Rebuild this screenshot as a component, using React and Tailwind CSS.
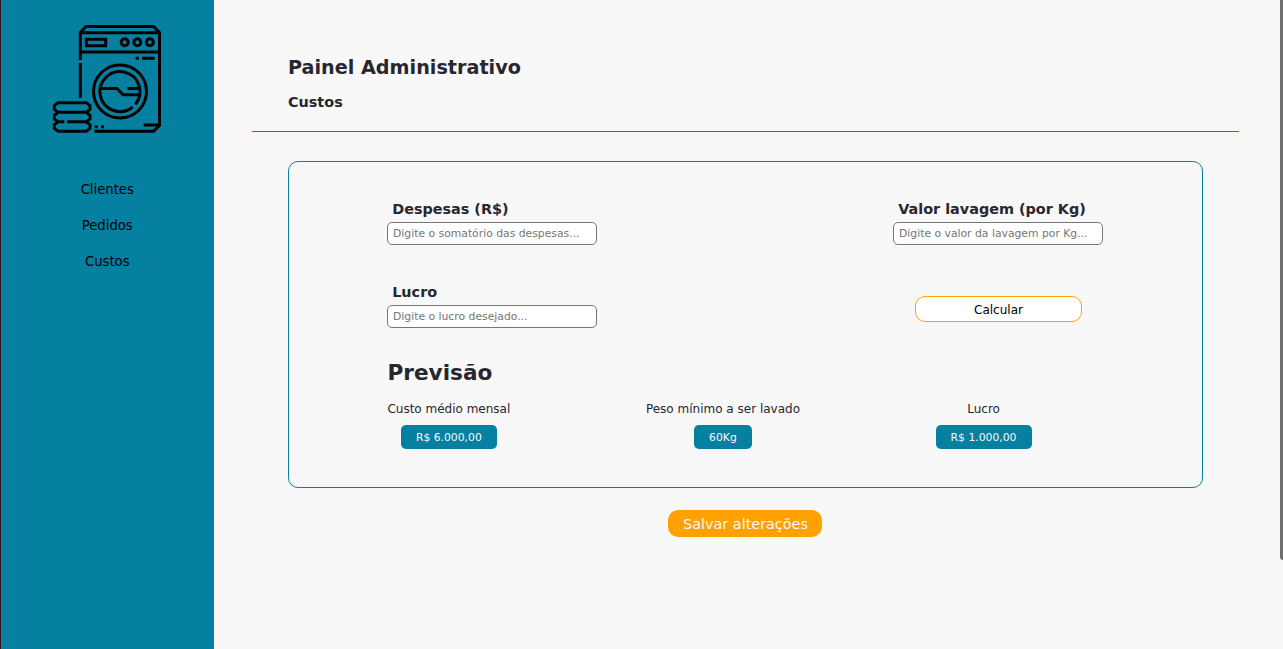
import React from 'react'

const font = "font-['DejaVu_Sans',sans-serif]"

function WasherLogo() {
  return (
    <svg className="mr-[2px] block h-[110px] w-[110px]" viewBox="36 27 330 330" fill="none" stroke="#000" strokeWidth="9">
      <path d="M121 135V53L138 34.500H341L358.500 53V331L341 349H163" />
      <path d="M121 53.500H358M121 111H358M121 144V249M287 129.500H297M306 129.500H344M311 330H358M164 335H173M183 335H192" />
      <path d="M139 72.500H197V92H139Z" />
      <circle cx="254" cy="82" r="10.500" />
      <circle cx="292" cy="82" r="10.500" />
      <circle cx="329.500" cy="82" r="10.500" />
      <circle cx="240" cy="229.500" r="79.500" />
      <path d="M278 276A60 60 0 1 1 286 268" />
      <path d="M181 220.500H231L249 239.500H299M262 220.500H299" />
      <path d="M54 263H139L150 272V283L139 292H54L43 283V272Z" />
      <path d="M54 292L43 301V312L54 320.500H73M81 320.500H139L150 312V301L139 292" />
      <path d="M54 320.500L43 329V340L54 349H139L150 340V329L139 320.500" />
    </svg>
  )
}

function Field({ label, placeholder }) {
  return (
    <label className="flex w-[210px] flex-col">
      <span className="pl-[5.2px] text-[14.4px] leading-[17px] font-bold">{label}</span>
      <input
        placeholder={placeholder}
        className="mt-1 h-[23px] w-full rounded-[5px] border border-[#767676] bg-white px-[5px] text-[10.8px] placeholder:text-[#757575]"
      />
    </label>
  )
}

function Stat({ label, value }) {
  return (
    <div className="flex flex-col items-center">
      <span className="text-[12px] leading-[14px]">{label}</span>
      <span className="mt-[9px] h-6 rounded-[5px] bg-[#0580a1] px-[15px] pt-[6px] text-[10.8px] leading-[13px] text-[#f8f8f8]">{value}</span>
    </div>
  )
}

export default function App() {
  return (
    <div className={`${font} relative flex h-[649px] w-full overflow-hidden bg-[#f8f8f8] text-[#28262e]`}>
      <aside className="flex w-[214px] shrink-0 flex-col items-center border-l border-[#2c1726] bg-[#0580a1] pt-6">
        <WasherLogo />
        <nav className="mt-[47px] mr-[0.5px] flex flex-col items-center gap-[18px] text-[13.2px] leading-[18px] text-black">
          <a>Clientes</a>
          <a>Pedidos</a>
          <a>Custos</a>
        </nav>
      </aside>

      <main className="flex flex-1 flex-col pr-11 pl-[38px]">
        <header className="h-[132px] border-b border-[#0580a1] pt-14 pl-9">
          <h1 className="text-[19.2px] leading-6 font-bold">Painel Administrativo</h1>
          <h2 className="mt-[13px] text-[14.4px] leading-[18px] font-bold">Custos</h2>
        </header>

        <section className="mx-9 mt-[29px] h-[327px] rounded-[10px] border border-[#0580a1] pt-[39px] pr-[99px] pl-[98px]">
          <div className="flex justify-between">
            <Field label="Despesas (R$)" placeholder="Digite o somatório das despesas..." />
            <Field label="Valor lavagem (por Kg)" placeholder="Digite o valor da lavagem por Kg..." />
          </div>
          <div className="mt-[39px] flex justify-between">
            <Field label="Lucro" placeholder="Digite o lucro desejado..." />
            <button className="mt-3 mr-[21px] h-[26px] w-[167px] rounded-[10px] border border-[#ffa100] bg-white pt-[2px] text-[12px] leading-[20px] text-black">
              Calcular
            </button>
          </div>
          <h3 className="mt-8 pl-[0.5px] text-[21.6px] leading-[26px] font-bold">Previsão</h3>
          <div className="mt-4 flex justify-between pr-[71.5px] pl-[0.4px]">
            <Stat label="Custo médio mensal" value="R$ 6.000,00" />
            <Stat label="Peso mínimo a ser lavado" value="60Kg" />
            <Stat label="Lucro" value="R$ 1.000,00" />
          </div>
        </section>

        <button className="mt-[22px] mr-px h-[27px] w-[154px] self-center rounded-[10px] bg-[#ffa100] pt-px pl-px text-[14.4px] leading-[22px] whitespace-nowrap text-[#f8f8f8]">
          Salvar alterações
        </button>
      </main>

      <div className="absolute top-0 right-0 h-[560px] w-[3px] rounded-bl-[3px] bg-[#6e6e6e]" />
    </div>
  )
}
